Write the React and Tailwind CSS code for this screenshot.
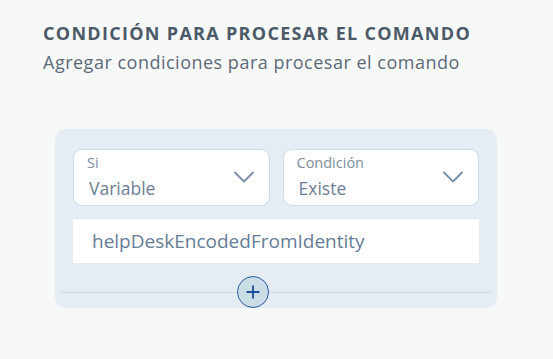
import { ChevronDown, Plus } from "lucide-react";

function SelectBox({ label, value }) {
  return (
    <div className="relative flex-1 h-[57px] bg-white border border-[#c9dde3] rounded-[9px] pl-[13px] pt-[3px]">
      <div className="text-[14.5px] leading-[20px] text-[#7d8ea3]">{label}</div>
      <div className="text-[17.5px] leading-[24px] text-[#6c7e96] pl-[2px] mt-[3px]">{value}</div>
      <ChevronDown
        className="absolute right-[7px] top-[9px] text-[#7b90a9]"
        size={36}
        strokeWidth={1.3}
      />
    </div>
  );
}

export default function App() {
  return (
    <div
      className="w-[553px] h-[359px] bg-[#f7f8f8] overflow-hidden"
      style={{ fontFamily: '"Open Sans", "Noto Sans", sans-serif' }}
    >
      {/* Header */}
      <div className="pl-[43px] pt-[21px]">
        <h1 className="text-[18px] leading-[24px] font-bold text-[#4c5a68] tracking-[1.3px]">
          CONDICIÓN PARA PROCESAR EL COMANDO
        </h1>
        <p className="text-[18px] leading-[24px] text-[#5d6a78] mt-[5px] tracking-[0.5px]">
          Agregar condiciones para procesar el comando
        </p>
      </div>

      {/* Condition card */}
      <div className="ml-[55px] mt-[55px] w-[442px] h-[179px] bg-[#e5ecf4] rounded-[11px] pt-[20px] flex flex-col">
        <div className="flex gap-[13px] px-[18px]">
          <SelectBox label="Si" value="Variable" />
          <SelectBox label="Condición" value="Existe" />
        </div>
        <div className="mx-[18px] mt-[13px] h-[44px] bg-white flex items-center pl-[19px] text-[19px] text-[#667c97]">
          helpDeskEncodedFromIdentity
        </div>
        <div className="relative mt-[29px] mx-[6px] h-px bg-[#c6dce6]">
          <button className="absolute left-[176px] top-[-16px] w-[32px] h-[32px] rounded-full bg-[#cadde6] border-[1.5px] border-[#2d5ba3] flex items-center justify-center text-[#1f4f99]">
            <Plus size={20} strokeWidth={2.2} />
          </button>
        </div>
      </div>
    </div>
  );
}
